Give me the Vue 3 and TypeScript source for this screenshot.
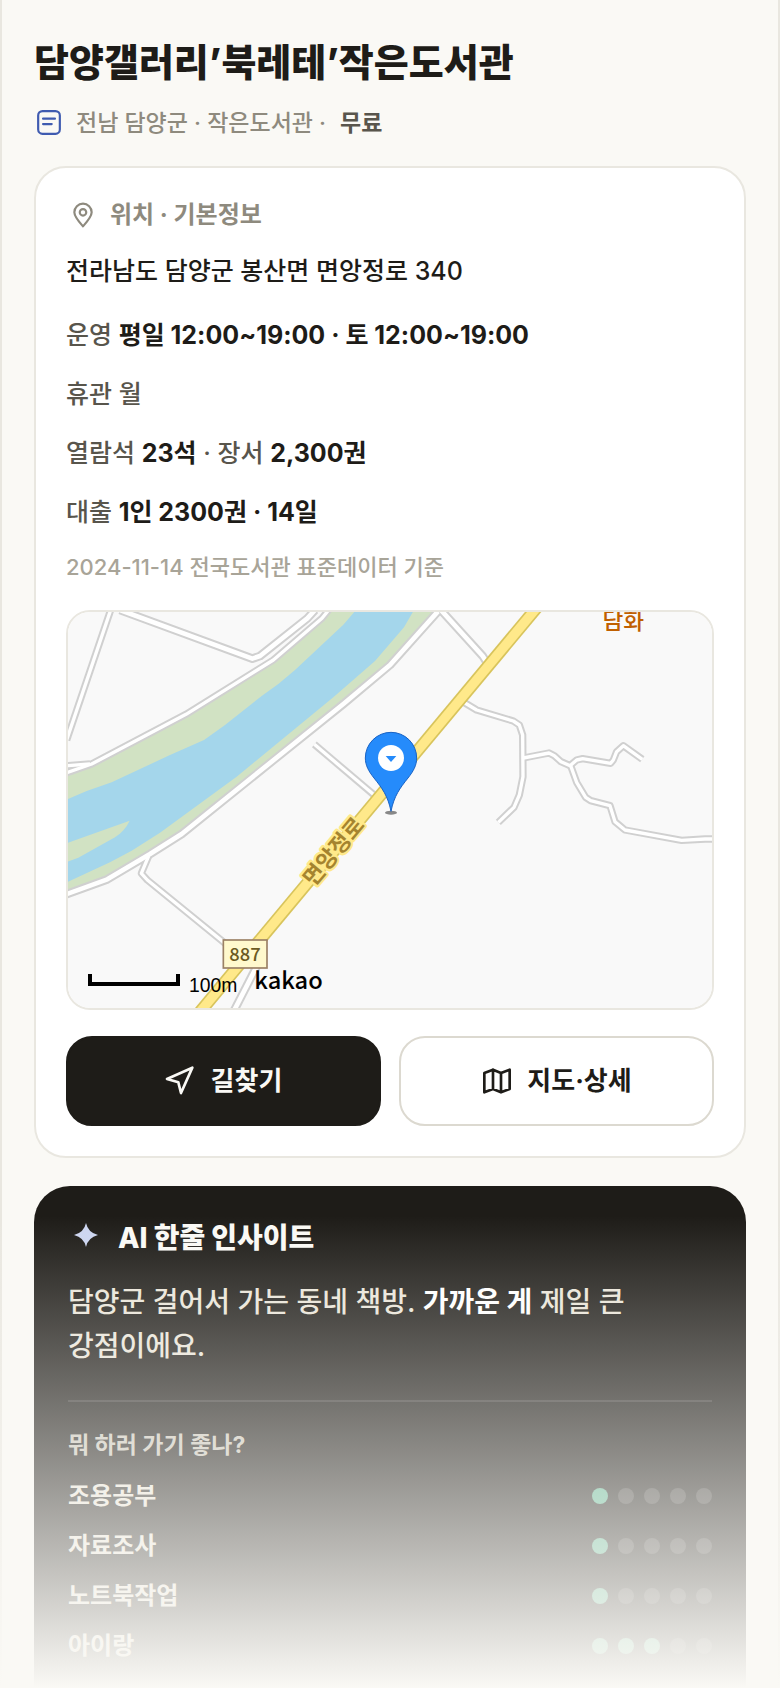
<script setup lang="ts">
interface Activity {
  name: string
  score: number
}

const activities: Activity[] = [
  { name: '조용공부', score: 1 },
  { name: '자료조사', score: 1 },
  { name: '노트북작업', score: 1 },
  { name: '아이랑', score: 3 },
]

const roads: { points: string; size: 'narrow' | 'wide' }[] = [
  { points: '152,30 20,420', size: 'narrow' },
  { points: '10,498 90,492', size: 'narrow' },
  { points: '10,522 95,492 378,343 640,180 786,55 806,30', size: 'narrow' },
  { points: '180,30 577,176 600,168 742,55 765,30', size: 'wide' },
  { points: '10,886 142,838 270,762 365,702 850,312 990,195 1134,34', size: 'wide' },
  { points: '1130,16 1268,168 1282,190', size: 'wide' },
  { points: '763,433 940,583', size: 'narrow' },
  { points: '266,768 244,820 262,840 500,1034', size: 'narrow' },
  { points: '600,1080 518,1240', size: 'wide' },
  { points: '1210,306 1250,330 1360,363 1378,375 1388,405 1389,530 1378,585 1362,622 1315,667', size: 'narrow' },
  { points: '1390,474 1467,459 1483,467 1503,485 1530,497 1550,480 1568,476 1652,490 1660,480 1670,455 1690,437 1747,478', size: 'narrow' },
  { points: '1532,497 1550,547 1577,592 1592,602 1650,617 1665,665 1695,690 1865,721 1935,717 1970,717', size: 'narrow' },
]
</script>

<template>
  <main class="page">
    <header class="intro">
      <h1>담양갤러리’북레테’작은도서관</h1>
      <p class="meta">
        <svg class="meta-icon" viewBox="0 0 24 24" aria-hidden="true">
          <rect x="2" y="1" width="20" height="21" rx="4" />
          <path d="M6.500 8h11M6.500 13h8" />
        </svg>
        <span>전남 담양군 · 작은도서관 ·</span>
        <strong>무료</strong>
      </p>
    </header>

    <section class="card">
      <h2 class="card-title">
        <svg class="pin-icon" viewBox="0 0 24 24" aria-hidden="true">
          <path d="M12 22.500C7.500 17.500 4 13.500 4 9.500a8 8 0 0 1 16 0c0 4-3.500 8-8 13z" />
          <circle cx="12" cy="9.500" r="3" />
        </svg>
        위치 · 기본정보
      </h2>
      <p class="address">전라남도 담양군 봉산면 면앙정로 340</p>
      <div class="details">
        <p>운영 <b>평일 12:00~19:00 · 토 12:00~19:00</b></p>
        <p>휴관 월</p>
        <p>열람석 <b>23석</b> · 장서 <b>2,300권</b></p>
        <p>대출 <b>1인 2300권 · 14일</b></p>
      </div>
      <p class="source">2024-11-14 전국도서관 표준데이터 기준</p>

      <div class="map">
        <svg viewBox="24 36 1932 1188" preserveAspectRatio="xMidYMid slice" role="img" aria-label="지도">
          <rect x="-2000" y="0" width="6000" height="1300" fill="#f9f9f9" />
          <path
            fill="#d1e2c3"
            d="M0 538L24 527 95 495 380 348 640 188 820 30H1125L985 190 850 308 365 694 275 755 150 823 0 880z"
          />
          <path
            fill="#a4d6eb"
            d="M0 607L24 597 80 573 155 547 330 465 432 420 495 375 605 288 655 252 705 210 850 74 888 30H1062L1032 82 945 183 820 292 530 530 300 698 215 752 150 787 0 856z"
          />
          <path fill="#d1e2c3" d="M0 737L24 728 209 662Q195 692 165 712L55 773 0 794z" />
          <g fill="none" stroke="#d0d0d0" stroke-linejoin="round">
            <polyline v-for="(r, i) in roads" :key="i" :points="r.points" :stroke-width="r.size === 'wide' ? 26 : 22" />
          </g>
          <g fill="none" stroke="#fff" stroke-linejoin="round">
            <polyline v-for="(r, i) in roads" :key="i" :points="r.points" :stroke-width="r.size === 'wide' ? 14 : 10" />
          </g>
          <path d="M1436 16L413 1244" fill="none" stroke="#d8c45c" stroke-width="38" />
          <path d="M1436 16L413 1244" fill="none" stroke="#ffe98a" stroke-width="28" />
          <text class="road-name" transform="translate(820 754) rotate(-50)" y="24">면앙정로</text>
          <rect x="490" y="1020" width="131" height="84" fill="#fff9cd" stroke="#9b8165" stroke-width="5" />
          <text class="route" x="555" y="1084">887</text>
          <text class="place" x="1690" y="87">담화</text>
          <path d="M90 1122V1152H354V1122" fill="none" stroke="#000" stroke-width="12" />
          <text class="scale" x="387" y="1175">100m</text>
          <text class="brand" x="583" y="1168">kakao</text>
          <ellipse cx="993" cy="638" rx="18" ry="6" fill="#888" />
          <path
            fill="#258bfb"
            stroke="#1862c4"
            stroke-width="3"
            d="M993 634C984 588 966 564 942 534C926 514 916 496 916 474a77 77 0 0 1 154 0C1070 496 1060 514 1044 534C1020 564 1002 588 993 634z"
          />
          <circle cx="993" cy="474" r="39" fill="#fff" />
          <path d="M977 468h32l-16 18z" fill="#258bfb" />
        </svg>
      </div>

      <div class="actions">
        <button type="button" class="btn primary">
          <svg viewBox="0 0 24 24" aria-hidden="true"><path d="M1.500 10.500L20.500 2 12 21 10 13z" /></svg>
          길찾기
        </button>
        <button type="button" class="btn">
          <svg viewBox="0 0 24 24" aria-hidden="true">
            <path d="M2.500 6L9 3.500 15 6 21.500 3.500V18L15 20.500 9 18 2.500 20.500zM9 3.500V18M15 6V20.500" />
          </svg>
          지도·상세
        </button>
      </div>
    </section>

    <div class="preview">
      <section class="insight">
        <h2 class="insight-title">
          <svg viewBox="0 3 24 24" aria-hidden="true">
            <path d="M12 0Q14 9.500 24 12 14 14.500 12 24 10 14.500 0 12 10 9.500 12 0z" />
          </svg>
          AI 한줄 인사이트
        </h2>
        <p class="summary">담양군 걸어서 가는 동네 책방. <b>가까운 게</b> 제일 큰 강점이에요.</p>
        <h3>뭐 하러 가기 좋나?</h3>
        <ul>
          <li v-for="a in activities" :key="a.name">
            <span>{{ a.name }}</span>
            <span class="dots" role="img" :aria-label="`5점 중 ${a.score}점`">
              <i v-for="n in 5" :key="n" :class="{ on: n <= a.score }"></i>
            </span>
          </li>
        </ul>
      </section>
    </div>
  </main>
</template>

<style>
body {
  background: #faf9f5;
}
</style>

<style scoped>
* {
  box-sizing: border-box;
  margin: 0;
  padding: 0;
}
.page {
  padding: 36px 0 0;
  border: solid #e9e7e0;
  border-width: 0 2px;
  background: #faf9f5;
  color: #1e1c18;
  font-family: Inter, "Noto Sans CJK KR", sans-serif;
  font-weight: 500;
  word-break: keep-all;
}
.intro,
.card {
  margin: 0 32px;
}
h1 {
  font-size: 38px;
  line-height: 52px;
  font-weight: 800;
}
.meta {
  display: flex;
  align-items: center;
  gap: 14px;
  margin: 17px 0 25px;
  padding-left: 2px;
  font-size: 23px;
  line-height: 36px;
  color: #8e8a7e;
}
.meta strong {
  color: #58554c;
  font-weight: 600;
}
svg {
  flex: none;
  display: block;
}
.meta-icon,
.pin-icon,
.btn svg {
  fill: none;
  stroke: currentColor;
  stroke-linecap: round;
  stroke-linejoin: round;
}
.meta-icon {
  width: 26px;
  height: 26px;
  color: #3f5bb0;
  stroke-width: 2;
}
.card {
  padding: 29px 30px 30px;
  border: 2px solid #e9e7e0;
  border-radius: 32px;
  background: #fff;
}
.card-title {
  display: flex;
  align-items: center;
  gap: 14px;
  padding-left: 4px;
  font-size: 24px;
  line-height: 36px;
  font-weight: 700;
  color: #8e8a7e;
}
.pin-icon {
  width: 26px;
  height: 26px;
  stroke-width: 2;
}
.address {
  margin-top: 18px;
  font-size: 25px;
  line-height: 40px;
}
.details {
  display: grid;
  gap: 19px;
  margin-top: 24px;
  font-size: 25px;
  line-height: 40px;
  color: #58554c;
}
.details b {
  color: #1e1c18;
  font-weight: 700;
}
.source {
  margin: 18px 0 26px;
  font-size: 22px;
  line-height: 34px;
  color: #a8a498;
}
.map {
  height: 400px;
  overflow: hidden;
  border: 2px solid #e9e7e0;
  border-radius: 24px;
}
.map svg {
  width: 100%;
  height: 100%;
}
.map text {
  font-family: "Noto Sans CJK KR", sans-serif;
}
.road-name {
  font-size: 66px;
  font-weight: 700;
  text-anchor: middle;
  fill: #a5842f;
  stroke: #ffe98a;
  stroke-width: 14px;
  stroke-linejoin: round;
  paint-order: stroke;
}
.route {
  font-size: 55px;
  text-anchor: middle;
  fill: #6b5a22;
}
.place {
  font-size: 68px;
  font-weight: 500;
  text-anchor: middle;
  fill: #c06000;
}
.map .scale {
  font-family: "Liberation Sans", sans-serif;
  font-size: 58px;
  font-weight: 400;
}
.brand {
  font-size: 71px;
  font-weight: 500;
}
.actions {
  display: grid;
  grid-template-columns: 1fr 1fr;
  gap: 18px;
  margin-top: 26px;
}
.btn {
  display: flex;
  align-items: center;
  justify-content: center;
  gap: 14px;
  height: 90px;
  border: 2px solid #dcd9d0;
  border-radius: 26px;
  background: #fff;
  color: #1e1c18;
  font: inherit;
  font-size: 26px;
  line-height: 32px;
  font-weight: 700;
}
.btn.primary {
  border-color: #1e1c18;
  background: #1e1c18;
  color: #faf9f5;
}
.btn svg {
  width: 32px;
  height: 32px;
  stroke-width: 2;
}
.preview {
  position: relative;
  margin-top: 28px;
  padding: 0 32px;
}
.preview::after {
  content: "";
  position: absolute;
  inset: 30px -2px 0;
  background: linear-gradient(#faf9f500, #faf9f5);
  pointer-events: none;
}
.insight {
  padding: 32px 34px 17px;
  border-radius: 36px 36px 0 0;
  background: #1e1c18;
  color: #faf9f5;
}
.insight-title {
  display: flex;
  align-items: center;
  gap: 20px;
  padding-left: 6px;
  font-size: 28px;
  line-height: 40px;
  font-weight: 800;
}
.insight-title svg {
  width: 24px;
  height: 24px;
  overflow: visible;
  fill: #ccd5f0;
}
.summary {
  margin-top: 22px;
  padding-bottom: 32px;
  border-bottom: 2px solid #ffffff1f;
  font-size: 28px;
  line-height: 44px;
  color: #e9e4d8;
}
.summary b {
  color: #fff;
  font-weight: 700;
}
h3 {
  margin-top: 26px;
  font-size: 23px;
  line-height: 34px;
  font-weight: 700;
  color: #c8c4b8;
}
ul {
  margin-top: 9px;
  list-style: none;
}
li {
  display: flex;
  align-items: center;
  justify-content: space-between;
  font-size: 24px;
  line-height: 50px;
  font-weight: 600;
  color: #e9e4d8;
}
.dots {
  display: flex;
  gap: 10px;
}
.dots i {
  width: 16px;
  height: 16px;
  border-radius: 50%;
  background: #ffffff29;
}
.dots i.on {
  background: #5bb38f;
}
</style>
